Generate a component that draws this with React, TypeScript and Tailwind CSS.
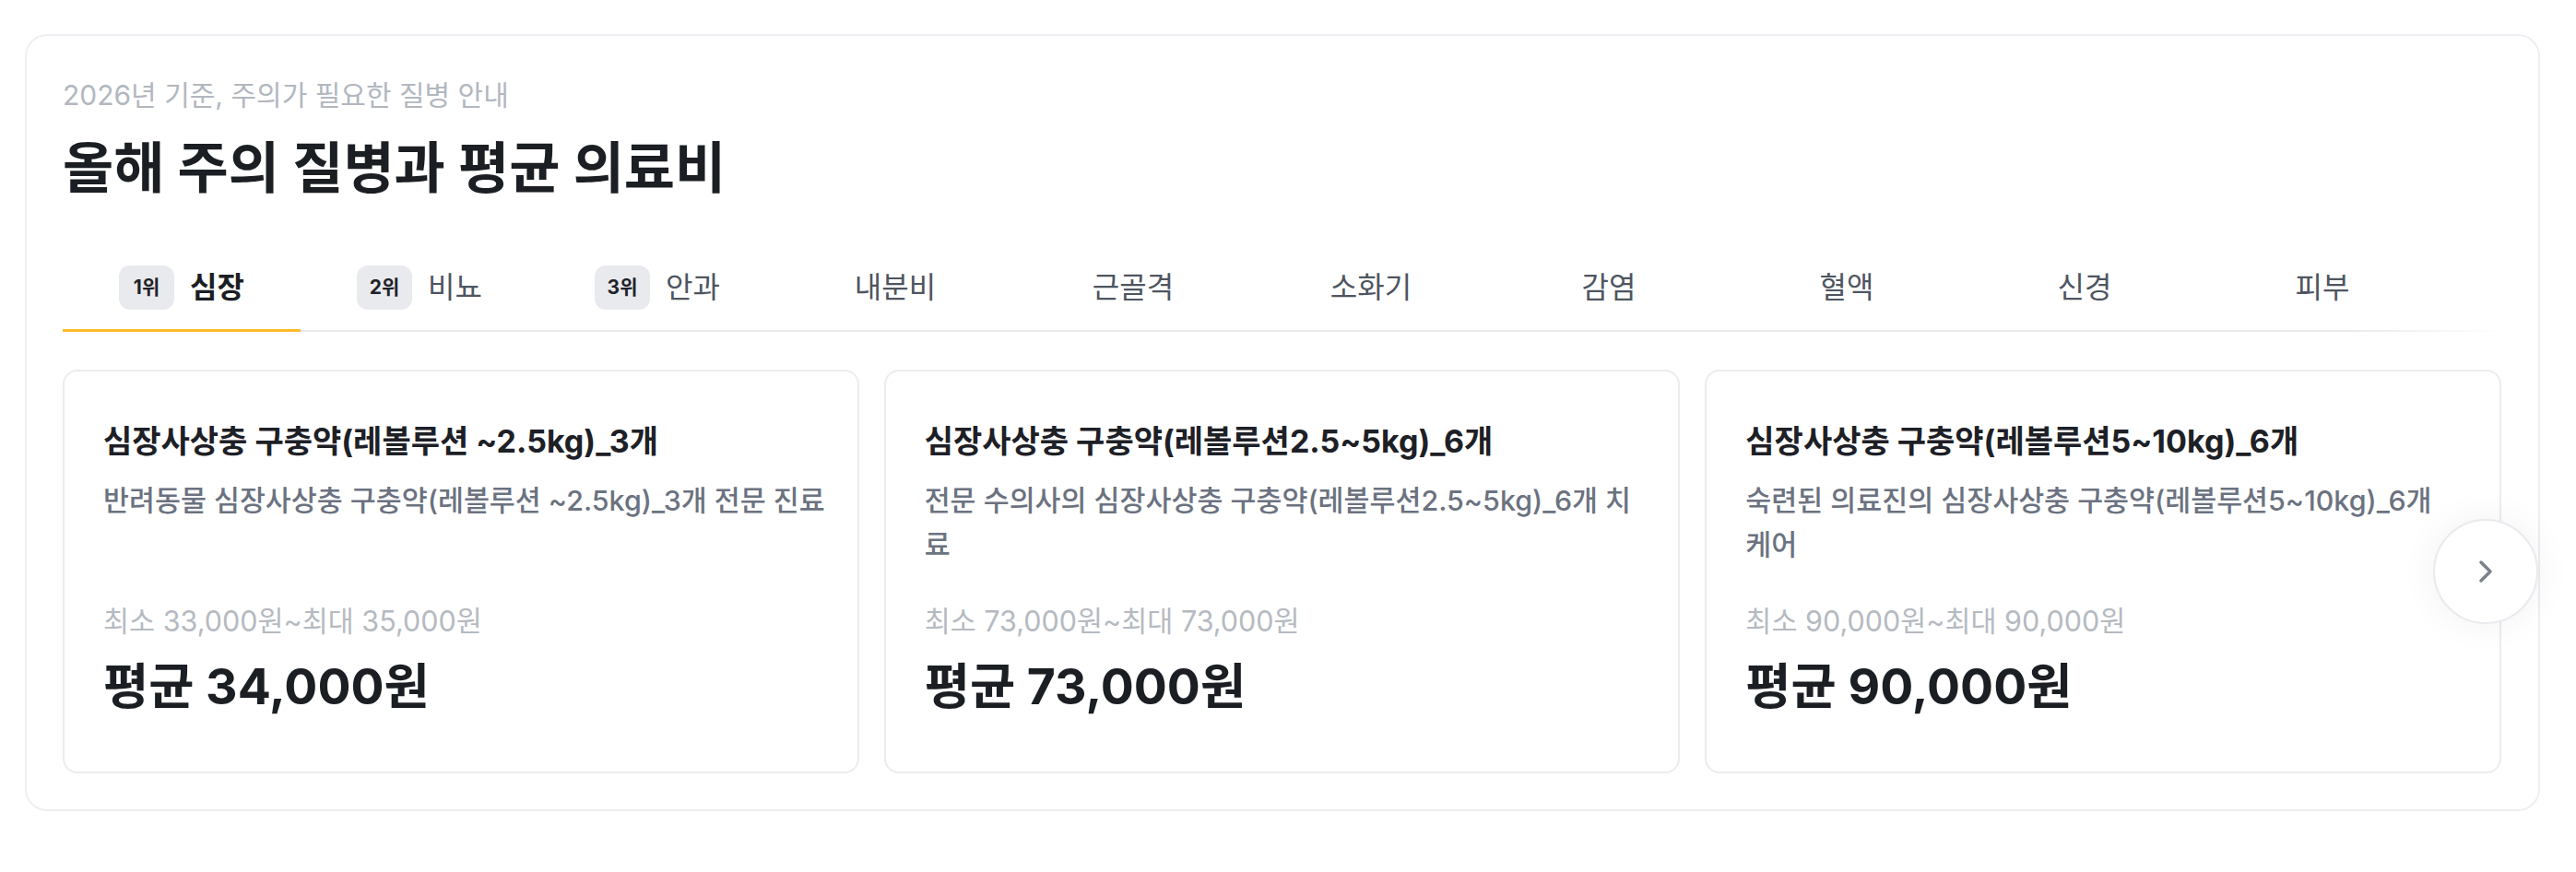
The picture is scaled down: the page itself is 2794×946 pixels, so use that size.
import React from "react";

const tabs = [
  { rank: "1위", label: "심장" },
  { rank: "2위", label: "비뇨" },
  { rank: "3위", label: "안과" },
  { rank: "", label: "내분비" },
  { rank: "", label: "근골격" },
  { rank: "", label: "소화기" },
  { rank: "", label: "감염" },
  { rank: "", label: "혈액" },
  { rank: "", label: "신경" },
  { rank: "", label: "피부" },
];

const cards = [
  {
    title: "심장사상충 구충약(레볼루션 ~2.5kg)_3개",
    desc: ["반려동물 심장사상충 구충약(레볼루션 ~2.5kg)_3개 전문 진료"],
    range: "최소 33,000원~최대 35,000원",
    avg: "평균 34,000원",
  },
  {
    title: "심장사상충 구충약(레볼루션2.5~5kg)_6개",
    desc: ["전문 수의사의 심장사상충 구충약(레볼루션2.5~5kg)_6개 치", "료"],
    range: "최소 73,000원~최대 73,000원",
    avg: "평균 73,000원",
  },
  {
    title: "심장사상충 구충약(레볼루션5~10kg)_6개",
    desc: ["숙련된 의료진의 심장사상충 구충약(레볼루션5~10kg)_6개", "케어"],
    range: "최소 90,000원~최대 90,000원",
    avg: "평균 90,000원",
  },
];

export default function App() {
  return (
    <div className="min-h-screen bg-white pt-[37px] pl-[27px] font-[Inter,'Noto_Sans_CJK_KR',sans-serif]">
      <section className="w-[2728px] rounded-[24px] border-2 border-[#eeeff2] bg-white pl-[39px] pr-[40px] pt-[43px] pb-[39px]">
        <p className="text-[30px] leading-[42px] text-[#b2b7bf]">
          2026년 기준, 주의가 필요한 질병 안내
        </p>
        <h2 className="mt-[20px] text-[60px] font-bold leading-[76px] text-[#1b1e23]">
          올해 주의 질병과 평균 의료비
        </h2>

        <div className="relative mt-[44px]">
          <div className="flex border-b-2 border-[#e9e9ee]">
            {tabs.map((t, i) => {
              const active = i === 0;
              return (
                <div
                  key={t.label}
                  className={
                    "-mb-[2px] flex w-[258px] shrink-0 items-center justify-center gap-[17px] border-b-[3px] pt-[24px] pb-[21px] " +
                    (active ? "border-[#fbbc2c]" : "border-transparent")
                  }
                >
                  {t.rank && (
                    <span className="flex h-[48px] w-[60px] items-center justify-center rounded-[12px] bg-[#e9eaee] text-[21px] font-bold text-[#1f2329]">
                      {t.rank}
                    </span>
                  )}
                  <span
                    className={
                      "flex h-[48px] items-center text-[32px] " +
                      (active ? "font-bold text-[#1b1e23]" : "text-[#4e5561]")
                    }
                  >
                    {t.label}
                  </span>
                </div>
              );
            })}
          </div>
          <div className="pointer-events-none absolute right-0 top-0 bottom-0 w-[170px] bg-gradient-to-l from-white to-transparent" />
        </div>

        <div className="relative mt-[41px] grid grid-cols-3 gap-[27px]">
          {cards.map((c) => (
            <div
              key={c.title}
              className="flex h-[438px] flex-col rounded-[16px] border-2 border-[#ebecef] bg-white pl-[42px] pr-[36px] pt-[52px]"
            >
              <div className="whitespace-nowrap text-[34px] font-bold leading-[48px] text-[#1d2026]">
                {c.title}
              </div>
              <div className="mt-[16px] min-h-[96px] text-[30.4px] font-medium leading-[48px] text-[#6b7280]">
                {c.desc.map((line) => (
                  <div key={line} className="whitespace-nowrap">
                    {line}
                  </div>
                ))}
              </div>
              <div className="mt-[37px] whitespace-nowrap text-[30.5px] leading-[44px] text-[#b5bac1]">
                {c.range}
              </div>
              <div className="mt-[18px] whitespace-nowrap text-[53.5px] font-bold leading-[62px] text-[#1b1e23]">
                {c.avg}
              </div>
            </div>
          ))}
          <button className="absolute right-[-40px] top-1/2 flex h-[114px] w-[114px] -translate-y-1/2 items-center justify-center rounded-full border-2 border-[#e9eaee] bg-white shadow-[0_0_40px_rgba(0,0,0,0.06)]">
            <svg width="18" height="28" viewBox="0 0 18 28" fill="none">
              <path
                d="M4 4 L14 14 L4 24"
                stroke="#7c818b"
                strokeWidth="3.5"
                strokeLinecap="round"
                strokeLinejoin="round"
              />
            </svg>
          </button>
        </div>
      </section>
    </div>
  );
}
